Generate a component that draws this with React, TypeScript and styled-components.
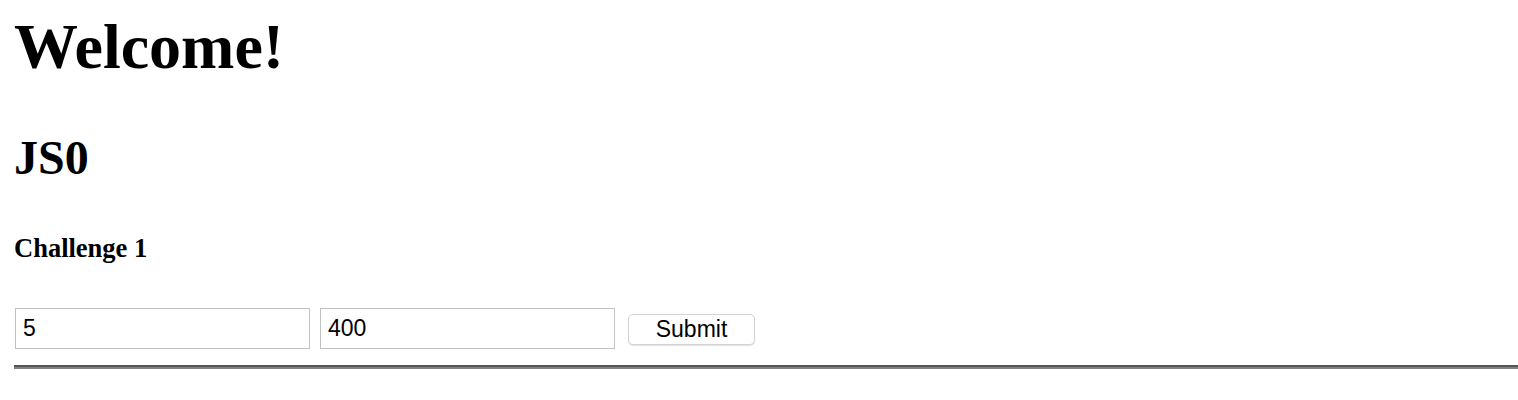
import React from "react";
import styled, { createGlobalStyle } from "styled-components";

const GlobalStyle = createGlobalStyle`
  html, body { margin: 0; padding: 0; background: #ffffff; }
  body {
    font-family: "Liberation Serif", "Times New Roman", serif;
    color: #000000;
  }
`;

const Page = styled.div`
  padding: 11px 0 0 14px;
  display: flex;
  flex-direction: column;
`;

const Title = styled.h1`
  margin: 0;
  font-family: "Liberation Serif", serif;
  font-weight: 700;
  font-size: 64px;
  line-height: 71px;
`;

const Subtitle = styled.h2`
  margin: 49px 0 0;
  font-family: "Liberation Serif", serif;
  font-weight: 700;
  font-size: 48px;
  line-height: 53px;
`;

const Heading = styled.h4`
  margin: 46px 0 0;
  font-family: "Liberation Serif", serif;
  font-weight: 700;
  font-size: 26.5px;
  line-height: 36px;
`;

const Form = styled.form`
  margin: 42px 0 0 1px;
  display: flex;
  align-items: center;
`;

const Field = styled.input`
  box-sizing: border-box;
  width: 295px;
  height: 41px;
  margin-right: 10px;
  padding: 0 7px;
  border: 1px solid #c2c2c2;
  border-radius: 0;
  background: #ffffff;
  font-family: "Liberation Sans", Arial, sans-serif;
  font-size: 23px;
  color: #000000;
  outline: none;
`;

const Button = styled.button`
  box-sizing: border-box;
  width: 127px;
  height: 31px;
  margin: 1px 0 0 3px;
  padding: 0;
  border: 1px solid #d4d4d4;
  border-radius: 5px;
  background: #ffffff;
  box-shadow: 0 1px 1px rgba(0, 0, 0, 0.12);
  font-family: "Liberation Sans", Arial, sans-serif;
  font-size: 23px;
  color: #000000;
`;

const Rule = styled.hr`
  margin: 16px 0 0 0;
  height: 0;
  border: none;
  border-top: 2px solid #545454;
  border-bottom: 2px solid #808080;
`;

export default function App() {
  return (
    <>
      <GlobalStyle />
      <Page>
        <Title>Welcome!</Title>
        <Subtitle>JS0</Subtitle>
        <Heading>Challenge 1</Heading>
        <Form onSubmit={(e) => e.preventDefault()}>
          <Field type="text" defaultValue="5" />
          <Field type="text" defaultValue="400" />
          <Button type="submit">Submit</Button>
        </Form>
        <Rule />
      </Page>
    </>
  );
}
